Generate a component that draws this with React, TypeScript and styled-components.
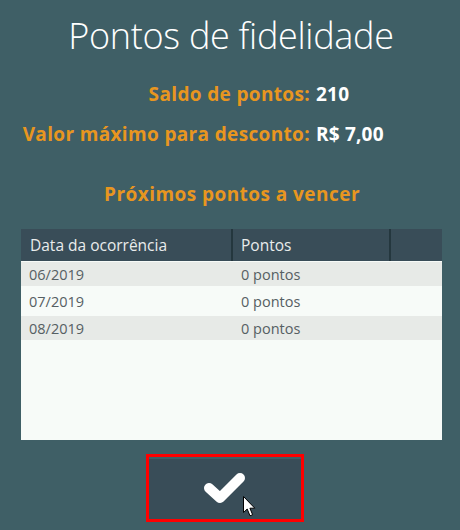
import React from 'react';
import styled, { createGlobalStyle } from 'styled-components';

const GlobalStyle = createGlobalStyle`
  html, body {
    margin: 0;
    padding: 0;
    background-color: #3f5f66;
  }

  body {
    font-family: 'Open Sans', 'Noto Sans', sans-serif;
    width: 460px;
    height: 530px;
    overflow: hidden;
  }
`;

const rows = [
  { date: '06/2019', points: '0 pontos' },
  { date: '07/2019', points: '0 pontos' },
  { date: '08/2019', points: '0 pontos' },
];

const App = () => {
  return (
    <>
      <GlobalStyle />
      <Wrapper>
        <Title>Pontos de fidelidade</Title>

        <Summary>
          <Label>Saldo de pontos:</Label>
          <Value>210</Value>
          <Label>Valor máximo para desconto:</Label>
          <Value>R$ 7,00</Value>
        </Summary>

        <Subtitle>Próximos pontos a vencer</Subtitle>

        <Table>
          <HeaderRow>
            <HeaderCell>Data da ocorrência</HeaderCell>
            <HeaderCell>Pontos</HeaderCell>
            <HeaderCell />
          </HeaderRow>
          <Body>
            {rows.map((row, index) => (
              <Row key={row.date} $striped={index % 2 === 0}>
                <Cell>{row.date}</Cell>
                <Cell>{row.points}</Cell>
                <Cell />
              </Row>
            ))}
          </Body>
        </Table>

        <ConfirmButton type="button">
          <svg width="46" height="36" viewBox="0 0 46 36">
            <polyline
              points="7,18 18,28 38,8"
              fill="none"
              stroke="#ffffff"
              strokeWidth="10"
              strokeLinecap="round"
              strokeLinejoin="round"
            />
          </svg>
          <Cursor width="14" height="22" viewBox="0 0 14 22">
            <path
              d="M0.5 0.5 L0.5 16.5 L4.2 13 L7 19.8 L9.6 18.7 L6.9 12.2 L11.8 12.2 Z"
              fill="#ffffff"
              stroke="#000000"
              strokeWidth="1"
              strokeLinejoin="miter"
            />
          </Cursor>
        </ConfirmButton>
      </Wrapper>
    </>
  );
};

export default App;

const Wrapper = styled.div`
  display: flex;
  flex-direction: column;
  align-items: center;
  width: 460px;
  height: 530px;
`;

const Title = styled.h1`
  margin: 12px 0 0 2px;
  font-size: 36px;
  font-weight: 300;
  line-height: 48px;
  color: #ffffff;
  letter-spacing: -0.3px;
`;

const Summary = styled.div`
  align-self: flex-start;
  display: grid;
  grid-template-columns: 288px auto;
  column-gap: 6px;
  row-gap: 14px;
  margin: 21px 0 0 22px;
`;

const Label = styled.span`
  text-align: right;
  font-size: 19px;
  font-weight: 700;
  line-height: 26px;
  letter-spacing: 0.35px;
  color: #e8961f;
  white-space: nowrap;
`;

const Value = styled.span`
  font-size: 19px;
  font-weight: 700;
  line-height: 26px;
  letter-spacing: 0.2px;
  color: #ffffff;
`;

const Subtitle = styled.h2`
  margin: 34px 0 0 4px;
  font-size: 19px;
  font-weight: 700;
  line-height: 26px;
  letter-spacing: 0.45px;
  color: #e8961f;
`;

const Table = styled.div`
  align-self: flex-start;
  display: flex;
  flex-direction: column;
  width: 421px;
  height: 211px;
  margin: 22px 0 0 21px;
`;

const HeaderRow = styled.div`
  display: grid;
  grid-template-columns: 210px 158px 53px;
  height: 32px;
  background-color: #394d58;
`;

const HeaderCell = styled.div`
  display: flex;
  align-items: center;
  padding-left: 9px;
  font-size: 15.5px;
  color: #e9ecec;

  & + & {
    border-left: 2px solid #24373e;
    padding-left: 8px;
  }
`;

const Body = styled.div`
  flex: 1;
  display: flex;
  flex-direction: column;
  gap: 3px;
  padding-top: 1px;
  background-color: #f7fbf8;
`;

const Row = styled.div<{ $striped: boolean }>`
  display: grid;
  grid-template-columns: 210px 158px 53px;
  height: 24px;
  background-color: ${(props) => (props.$striped ? '#e7eae7' : 'transparent')};
`;

const Cell = styled.div`
  display: flex;
  align-items: center;
  padding-left: 8px;
  font-size: 14.5px;
  color: #566063;

  & + & {
    padding-left: 10px;
  }
`;

const ConfirmButton = styled.button`
  position: relative;
  display: flex;
  align-items: center;
  justify-content: center;
  width: 158px;
  height: 68px;
  margin: 14px 0 0 -11px;
  padding: 0;
  border: 3px solid #ff0000;
  background-color: #394d58;
  box-shadow: inset 0 2px 0 #3f5f66;
  cursor: pointer;
`;

const Cursor = styled.svg`
  position: absolute;
  left: 94px;
  top: 39px;
`;
